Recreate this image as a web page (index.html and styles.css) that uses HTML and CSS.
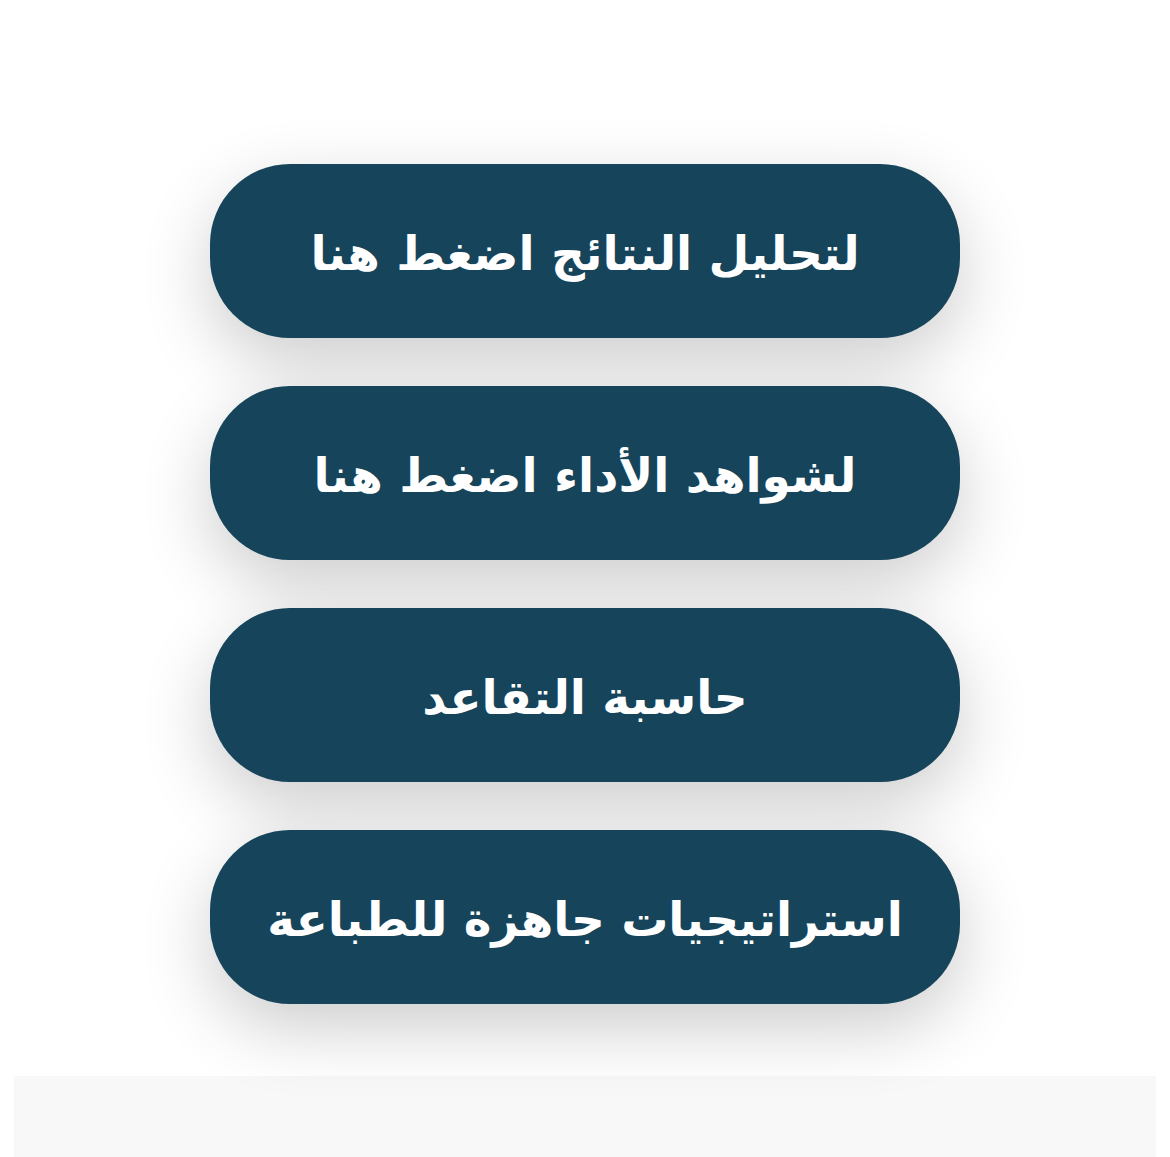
FILE: index.html
```html
<!DOCTYPE html>
<html lang="ar" dir="rtl">
<head>
<meta charset="utf-8">
<title>روابط</title>
<link rel="stylesheet" href="styles.css">
</head>
<body>
<main class="page">
  <nav class="buttons">
    <a class="btn" href="#">لتحليل النتائج اضغط هنا</a>
    <a class="btn" href="#">لشواهد الأداء اضغط هنا</a>
    <a class="btn" href="#">حاسبة التقاعد</a>
    <a class="btn" href="#">استراتيجيات جاهزة للطباعة</a>
  </nav>
  <div class="band"></div>
</main>
</body>
</html>
```
FILE: styles.css
```css
html, body {
  margin: 0;
  padding: 0;
  background: #ffffff;
}
.page {
  width: 1170px;
  height: 1157px;
  overflow: hidden;
  display: flex;
  flex-direction: column;
  align-items: center;
}
.buttons {
  margin-top: 164px;
  display: flex;
  flex-direction: column;
  gap: 48px;
  position: relative;
  z-index: 1;
}
.btn {
  width: 750px;
  height: 174px;
  border-radius: 80px;
  background: #15445b;
  color: #ffffff;
  text-decoration: none;
  display: flex;
  align-items: center;
  justify-content: center;
  font-family: "DejaVu Sans", sans-serif;
  font-weight: bold;
  font-size: 47px;
  box-shadow: 0 24px 70px rgba(0, 0, 0, 0.2);
  padding-top: 4px;
  box-sizing: border-box;
}
.band {
  margin-top: 72px;
  align-self: stretch;
  margin-left: 14px;
  margin-right: 14px;
  flex: 1;
  background: #f8f8f8;
}
```
